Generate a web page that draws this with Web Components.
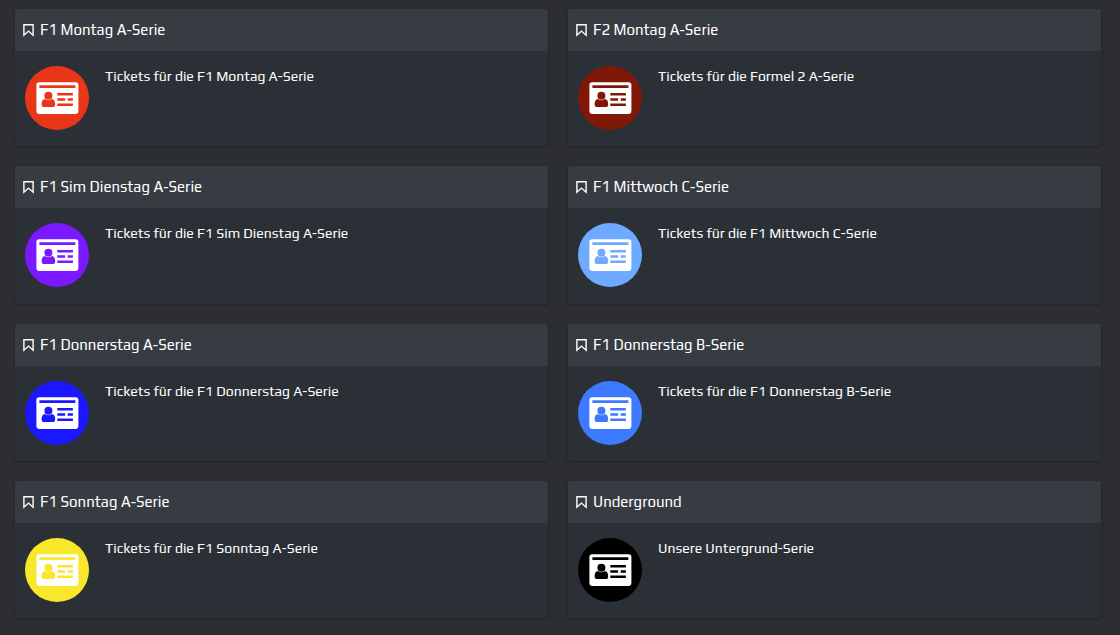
<!DOCTYPE html>
<html lang="de">
<head>
  <meta charset="UTF-8">
  <meta name="viewport" content="width=device-width, initial-scale=1">
  <title>Tickets</title>
  <style>
    body {
      margin: 0;
      background-color: #2d2e31;
      color: #fff;
      font-family: Play, "Noto Sans", "Open Sans", sans-serif;
    }
  </style>
</head>
<body>
  <category-list>
    <category-card heading="F1 Montag A-Serie" color="#e93618">Tickets für die F1 Montag A-Serie</category-card>
    <category-card heading="F2 Montag A-Serie" color="#801808">Tickets für die Formel 2 A-Serie</category-card>
    <category-card heading="F1 Sim Dienstag A-Serie" color="#7a18ff">Tickets für die F1 Sim Dienstag A-Serie</category-card>
    <category-card heading="F1 Mittwoch C-Serie" color="#6eaaff">Tickets für die F1 Mittwoch C-Serie</category-card>
    <category-card heading="F1 Donnerstag A-Serie" color="#1b18ff">Tickets für die F1 Donnerstag A-Serie</category-card>
    <category-card heading="F1 Donnerstag B-Serie" color="#3d7aff">Tickets für die F1 Donnerstag B-Serie</category-card>
    <category-card heading="F1 Sonntag A-Serie" color="#f9e72c">Tickets für die F1 Sonntag A-Serie</category-card>
    <category-card heading="Underground" color="#000000">Unsere Untergrund-Serie</category-card>
  </category-list>

  <script>
    class BookmarkIcon extends HTMLElement {
      constructor() {
        super();
        this.attachShadow({ mode: 'open' });
      }

      connectedCallback() {
        this.shadowRoot.innerHTML = `
          <style>
            :host { display: block; width: 11px; height: 14px; }
            svg { display: block; }
          </style>
          <svg width="11" height="14" viewBox="0 0 11 14" fill="none" stroke="currentColor" stroke-width="1.4" aria-hidden="true">
            <path d="M.9 1.700h9.200v10.500L5.500 8.100.9 12.200z"/>
          </svg>
        `;
      }
    }

    class TicketIcon extends HTMLElement {
      constructor() {
        super();
        this.attachShadow({ mode: 'open' });
      }

      connectedCallback() {
        this.shadowRoot.innerHTML = `
          <style>
            :host { display: block; flex: none; width: 64px; height: 64px; }
            svg { display: block; }
            .cut { fill: var(--ticket-color); }
          </style>
          <svg width="64" height="64" viewBox="0 0 64 64" aria-hidden="true">
            <circle class="cut" cx="32" cy="32" r="32"/>
            <rect x="11.4" y="16.3" width="42" height="31.6" rx="2.8" fill="#fff"/>
            <g class="cut">
              <path d="M14.4 19.3h36v2.6h-36z"/>
              <circle cx="23.4" cy="29.7" r="4"/>
              <path d="M19.9 33c2 1.6 5 1.6 7 0 2.1 0 3.3 2.3 3.3 5.2 0 1.900-1 2.900-2.500 2.900h-8.600c-1.500 0-2.500-1-2.500-2.900 0-2.900 1.200-5.200 3.300-5.200z"/>
              <path d="M32.300 27h15.600v2.400H32.300zM32.300 32.300h7.800v2.400h-7.800zM42.700 32.300h5.200v2.400h-5.200zM32.300 37.500h15.600v2.400H32.300z"/>
            </g>
          </svg>
        `;
      }
    }

    class CategoryCard extends HTMLElement {
      constructor() {
        super();
        this.attachShadow({ mode: 'open' });
      }

      connectedCallback() {
        this.render();
      }

      render() {
        this.shadowRoot.innerHTML = `
          <style>
            :host {
              --ticket-color: ${this.getAttribute('color')};
              display: flex;
              flex-direction: column;
              background-color: #2b3036;
              border-radius: 3px;
              box-shadow: 0 1px 3px rgba(0, 0, 0, 0.3);
              overflow: hidden;
            }
            header {
              display: flex;
              align-items: center;
              gap: 6px;
              height: 42px;
              padding: 0 8px;
              background-color: #373c42;
            }
            h2 {
              margin: 0;
              font-size: 15px;
              font-weight: 400;
              line-height: 20px;
            }
            .body {
              display: flex;
              gap: 16px;
              padding: 15px 10px;
            }
            p {
              margin: 0;
              font-size: 14px;
              line-height: 20px;
            }
          </style>
          <header>
            <bookmark-icon></bookmark-icon>
            <h2>${this.getAttribute('heading')}</h2>
          </header>
          <div class="body">
            <ticket-icon></ticket-icon>
            <p><slot></slot></p>
          </div>
        `;
      }
    }

    class CategoryList extends HTMLElement {
      constructor() {
        super();
        this.attachShadow({ mode: 'open' });
      }

      connectedCallback() {
        this.shadowRoot.innerHTML = `
          <style>
            :host {
              display: grid;
              grid-template-columns: 1fr 1fr;
              grid-auto-rows: 1fr;
              gap: 20px;
              box-sizing: border-box;
              min-height: 100vh;
              padding: 9px 19px 17px 15px;
            }
          </style>
          <slot></slot>
        `;
      }
    }

    customElements.define('bookmark-icon', BookmarkIcon);
    customElements.define('ticket-icon', TicketIcon);
    customElements.define('category-card', CategoryCard);
    customElements.define('category-list', CategoryList);
  </script>
</body>
</html>
